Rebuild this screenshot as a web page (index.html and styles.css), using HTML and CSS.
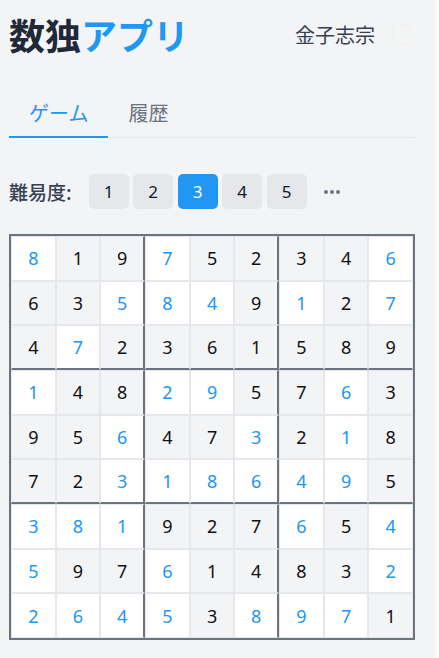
FILE: index.html
```html
<!DOCTYPE html>
<html lang="ja">
<head>
<meta charset="utf-8">
<title>数独アプリ</title>
<link rel="stylesheet" href="styles.css">
</head>
<body>
<div class="page">
  <header class="header">
    <h1 class="title">数独<span class="title-accent">アプリ</span></h1>
    <div class="user">
      <span class="user-name">金子志宗</span>
      <span class="user-box"></span>
    </div>
  </header>
  <nav class="tabs">
    <div class="tab tab-active">ゲーム</div>
    <div class="tab">履歴</div>
  </nav>
  <div class="difficulty">
    <span class="difficulty-label">難易度:</span>
    <div class="levels">
      <button class="level">1</button>
      <button class="level">2</button>
      <button class="level level-active">3</button>
      <button class="level">4</button>
      <button class="level">5</button>
      <span class="more" aria-label="その他"><i class="dot"></i><i class="dot"></i><i class="dot"></i></span>
    </div>
  </div>
  <div class="board" id="board"></div>
</div>
<script>
  var rows = [
    "8b 1 9 7b 5 2 3 4 6b",
    "6 3 5b 8b 4b 9 1b 2 7b",
    "4 7b 2 3 6 1 5 8 9",
    "1b 4 8 2b 9b 5 7 6b 3",
    "9 5 6b 4 7 3b 2 1b 8",
    "7 2 3b 1b 8b 6b 4b 9b 5",
    "3b 8b 1b 9 2 7 6b 5 4b",
    "5b 9 7 6b 1 4 8 3 2b",
    "2b 6b 4b 5b 3 8b 9b 7b 1"
  ];
  var board = document.getElementById('board');
  rows.forEach(function (row, r) {
    row.split(' ').forEach(function (v, c) {
      var d = document.createElement('div');
      var cls = 'cell ' + (v.length > 1 ? 'cell-input' : 'cell-given');
      if (c === 2 || c === 5) cls += ' cell-box-right';
      if (r === 2 || r === 5) cls += ' cell-box-bottom';
      d.className = cls;
      d.textContent = v.charAt(0);
      board.appendChild(d);
    });
  });
</script>
</body>
</html>
```
FILE: styles.css
```css
* { box-sizing: border-box; }
html { background: #fafafa; }
body {
  margin: 0;
  font-family: "Noto Sans", "Noto Sans CJK JP", sans-serif;
  color: #111827;
}
.page {
  width: 435px;
  min-height: 658px;
  background: #f3f4f6;
  padding: 14px 20px 0 9px;
}
.header {
  display: flex;
  align-items: center;
  justify-content: space-between;
  height: 40px;
  margin-bottom: 36px;
}
.title {
  margin: 0;
  font-size: 36px;
  line-height: 40px;
  font-weight: 700;
  color: #1f2937;
  font-family: "Noto Sans CJK JP", sans-serif;
}
.title-accent { color: #2196f3; }
.user {
  display: flex;
  align-items: center;
  gap: 17px;
  padding-right: 4px;
}
.user-name {
  font-size: 20px;
  color: #374151;
  font-family: "Noto Sans CJK JP", sans-serif;
}
.user-box {
  width: 19px;
  height: 21px;
  border: 1px solid #f1f1ea;
  border-radius: 3px;
}
.tabs {
  display: flex;
  border-bottom: 1px solid #e5e7eb;
}
.tab {
  padding: 10px 20px;
  font-size: 20px;
  line-height: 26px;
  color: #6b7280;
  font-family: "Noto Sans CJK JP", sans-serif;
  border-bottom: 2px solid transparent;
  margin-bottom: -1px;
}
.tab-active {
  color: #2196f3;
  border-bottom-color: #2196f3;
}
.difficulty {
  display: flex;
  align-items: center;
  margin-top: 36px;
  gap: 17px;
}
.difficulty-label {
  font-size: 19px;
  color: #374151;
  font-weight: 500;
  font-family: "Noto Sans CJK JP", sans-serif;
}
.levels {
  display: flex;
  align-items: center;
  gap: 4.5px;
}
.level {
  width: 40px;
  height: 35px;
  border: 0;
  border-radius: 5px;
  background: #e5e7eb;
  color: #111827;
  font-family: "Noto Sans", sans-serif;
  font-size: 17px;
  padding: 0;
}
.level-active {
  background: #2196f3;
  color: #ffffff;
}
.more {
  display: flex;
  gap: 2px;
  margin-left: 12.5px;
}
.dot {
  width: 4px;
  height: 4px;
  border-radius: 50%;
  background: #6b7280;
}
.board {
  margin-top: 25px;
  width: 406px;
  display: grid;
  grid-template-columns: repeat(9, 1fr);
  border: 2px solid #6b7280;
}
.cell {
  aspect-ratio: 1;
  display: flex;
  align-items: center;
  justify-content: center;
  border: 1px solid #e5e7eb;
  font-size: 18px;
}
.cell-given {
  background: #f3f4f6;
  color: #111111;
}
.cell-input {
  background: #ffffff;
  color: #2196f3;
}
.cell-box-right { border-right: 2px solid #6b7280; }
.cell-box-bottom { border-bottom: 2px solid #6b7280; }
```
